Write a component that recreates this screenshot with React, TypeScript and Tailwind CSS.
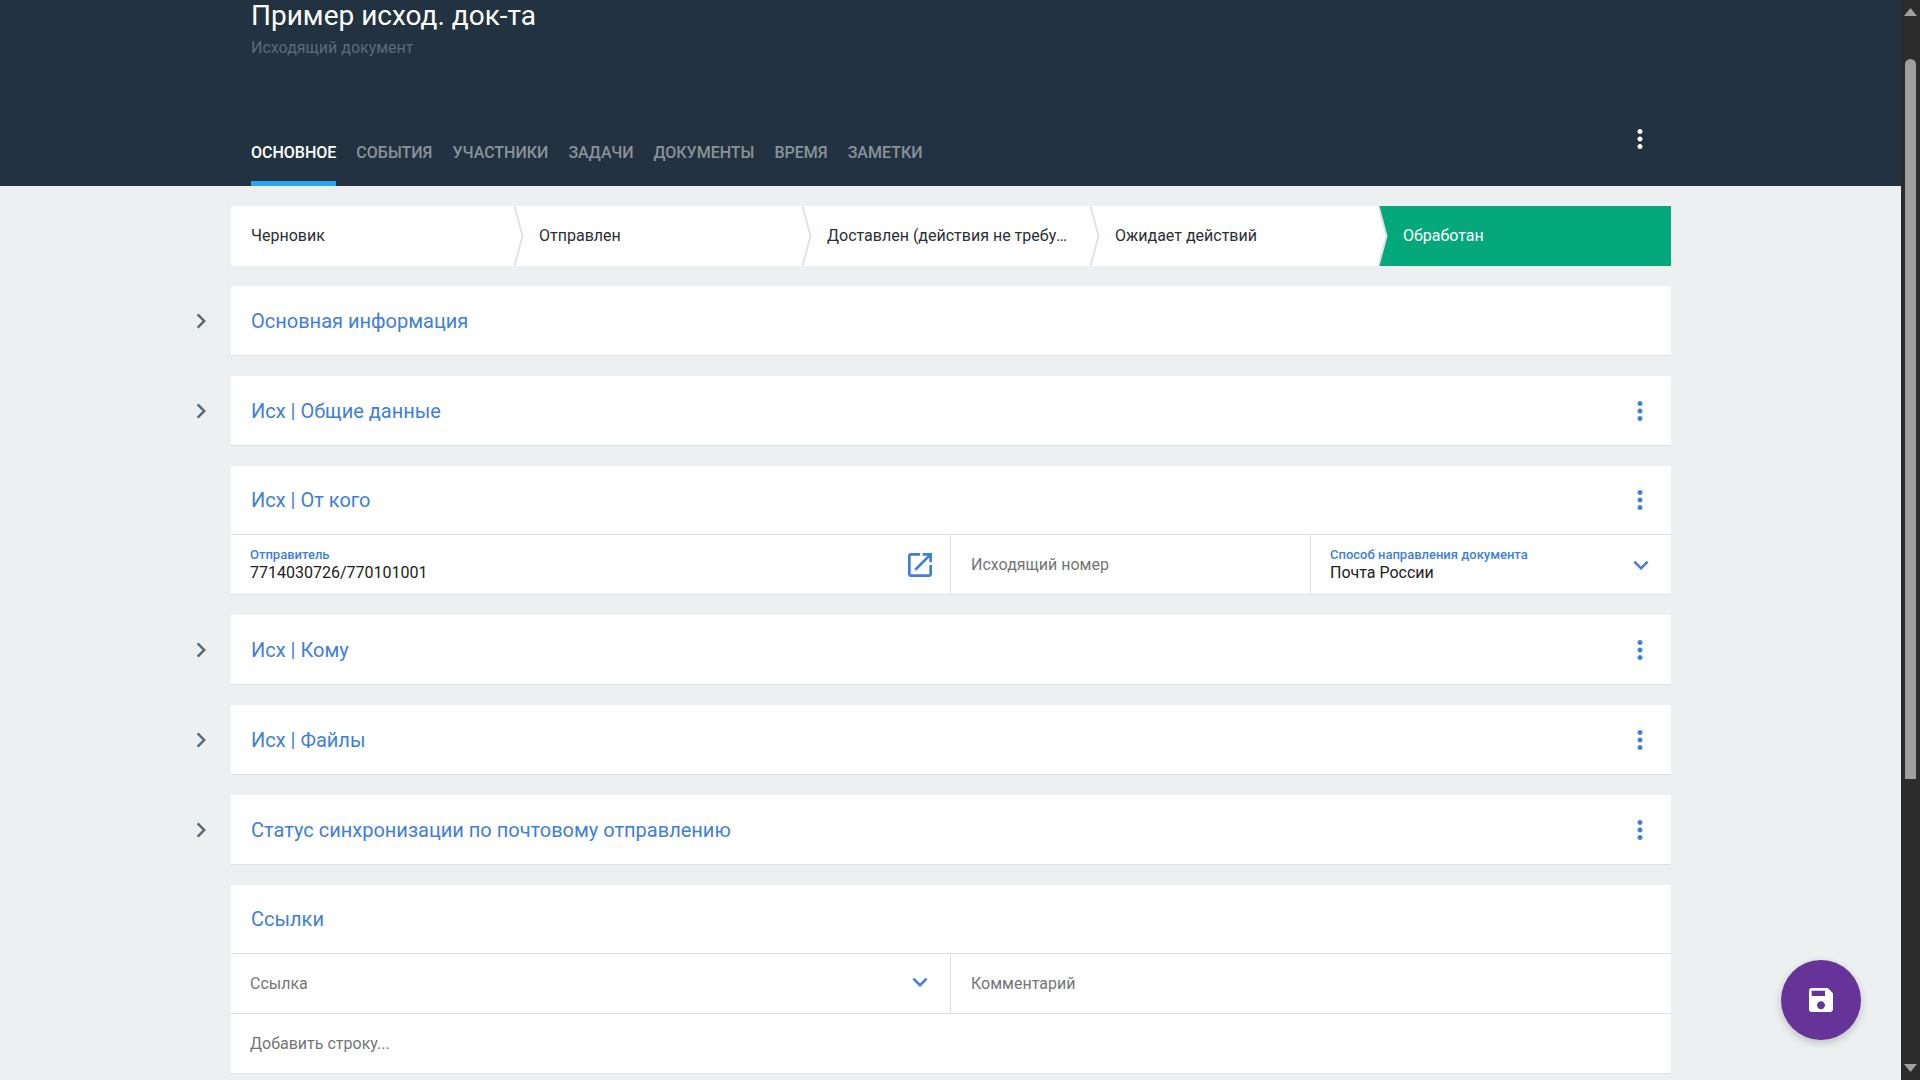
const MoreVert = ({ className }: { className: string }) => (
  <svg viewBox="0 0 24 24" width="30" height="30" fill="currentColor" className={className}>
    <path d="M12 8c1.1 0 2-.9 2-2s-.9-2-2-2-2 .9-2 2 .9 2 2 2zm0 2c-1.1 0-2 .9-2 2s.9 2 2 2 2-.9 2-2-.9-2-2-2zm0 6c-1.1 0-2 .9-2 2s.9 2 2 2 2-.9 2-2-.9-2-2-2z" />
  </svg>
);

const ExpandMore = () => (
  <svg viewBox="0 0 24 24" width="30" height="30" fill="currentColor" className="text-[#3f7fd9]">
    <path d="M16.59 8.59L12 13.17 7.41 8.59 6 10l6 6 6-6z" />
  </svg>
);

const OpenInNew = () => (
  <svg viewBox="0 0 24 24" width="32" height="32" fill="currentColor" className="text-[#3f7fd9]">
    <path d="M19 19H5V5h7V3H5c-1.11 0-2 .9-2 2v14c0 1.1.89 2 2 2h14c1.1 0 2-.9 2-2v-7h-2v7zM14 3v2h3.59l-9.83 9.83 1.41 1.41L19 6.41V10h2V3h-7z" />
  </svg>
);

const SaveIcon = () => (
  <svg viewBox="0 0 24 24" width="32" height="32" fill="currentColor" className="text-white">
    <path d="M17 3H5c-1.11 0-2 .9-2 2v14c0 1.1.89 2 2 2h14c1.1 0 2-.9 2-2V7l-4-4zm-5 16c-1.66 0-3-1.34-3-3s1.34-3 3-3 3 1.34 3 3-1.34 3-3 3zm3-10H5V5h10v4z" />
  </svg>
);

const Card = ({
  title,
  kebab = true,
  open = false,
  children,
}: {
  title: string;
  kebab?: boolean;
  open?: boolean;
  children?: React.ReactNode;
}) => (
  <section className="relative bg-white">
    {!open && (
      <svg
        viewBox="0 0 24 24"
        width="30"
        height="30"
        fill="currentColor"
        className="absolute -left-[45px] top-5 text-[#5d6974]"
      >
        <path d="M10 6L8.59 7.41 13.17 12l-4.58 4.59L10 18l6-6z" />
      </svg>
    )}
    <div
      className={`flex items-center justify-between border-b border-[#dde1e4] pl-5 pr-4 ${
        open ? "h-[69px]" : "h-[70px]"
      }`}
    >
      <h2 className="text-[20px] leading-6 font-normal text-[#3f7fd9]">{title}</h2>
      {kebab && <MoreVert className="text-[#3f7fd9]" />}
    </div>
    {children}
  </section>
);

const Stage = ({ label, first = false, active = false }: { label: string; first?: boolean; active?: boolean }) => (
  <div className="relative flex h-full min-w-0 flex-1 items-center px-5">
    {active && (
      <div className="absolute inset-y-0 -left-[5px] right-0 bg-[#05a87a] [clip-path:polygon(0_0,100%_0,100%_100%,0_100%,9px_50%)]" />
    )}
    {!first && (
      <svg viewBox="0 0 10 60" width="10" height="60" className="absolute -left-[5px] top-0" fill="none">
        <polyline points="0.5,0 8.5,30 0.5,60" stroke="#dde3e6" strokeWidth="2" />
      </svg>
    )}
    <span className={`relative truncate text-[16px] ${active ? "text-white" : "text-[#2b2f33]"}`}>{label}</span>
  </div>
);

export default function App() {
  const tabs = ["Основное", "События", "Участники", "Задачи", "Документы", "Время", "Заметки"];
  return (
    <div className="flex h-screen overflow-hidden bg-[#ecf0f1] font-['Roboto',sans-serif]">
      <div className="min-w-0 flex-1 overflow-hidden">
        <header className="flex h-[186px] flex-col bg-[#233240] pl-[251px]">
          <h1 className="text-[28px] leading-8 font-normal text-white">Пример исход. док-та</h1>
          <p className="mt-[6px] text-[16px] leading-5 text-[#5c6b79]">Исходящий документ</p>
          <div className="mt-auto flex h-[66px] items-stretch justify-between pr-[246px]">
            <nav className="flex gap-5">
              {tabs.map((t, i) => (
                <a
                  key={t}
                  className={`flex items-center border-b-[5px] pt-[5px] text-[16px] font-medium uppercase ${
                    i === 0 ? "border-[#29a9ec] text-white" : "border-transparent text-[#8a929a]"
                  }`}
                >
                  {t}
                </a>
              ))}
            </nav>
            <div className="flex items-start pt-[4px]">
              <MoreVert className="text-white" />
            </div>
          </div>
        </header>

        <main className="ml-[231px] flex w-[1440px] flex-col gap-5 pt-5">
          <div className="flex h-[60px] bg-white">
            <Stage first label="Черновик" />
            <Stage label="Отправлен" />
            <Stage label="Доставлен (действия не требуют ответа)" />
            <Stage label="Ожидает действий" />
            <Stage active label="Обработан" />
          </div>

          <Card title="Основная информация" kebab={false} />
          <Card title="Исх | Общие данные" />
          <Card title="Исх | От кого" open>
            <div className="grid h-[60px] grid-cols-[720px_360px_360px] border-b border-[#dde1e4]">
              <div className="flex items-center justify-between border-r border-[#dde1e4] pr-[14px] pl-[19px]">
                <div>
                  <div className="text-[13px] leading-4 font-medium text-[#3f7fd9]">Отправитель</div>
                  <div className="text-[16px] leading-5 text-[#212121]">7714030726/770101001</div>
                </div>
                <OpenInNew />
              </div>
              <div className="flex items-center border-r border-[#dde1e4] pl-5 text-[16px] text-[#757575]">
                Исходящий номер
              </div>
              <div className="flex items-center justify-between pr-[15px] pl-[19px]">
                <div>
                  <div className="text-[13px] leading-4 font-medium text-[#3f7fd9]">Способ направления документа</div>
                  <div className="text-[16px] leading-5 text-[#212121]">Почта России</div>
                </div>
                <ExpandMore />
              </div>
            </div>
          </Card>
          <Card title="Исх | Кому" />
          <Card title="Исх | Файлы" />
          <Card title="Статус синхронизации по почтовому отправлению" />
          <Card title="Ссылки" kebab={false} open>
            <div className="grid h-[60px] grid-cols-[720px_720px] border-b border-[#dde1e4]">
              <div className="flex items-center justify-between border-r border-[#dde1e4] pr-[15px] pl-[19px] text-[16px] text-[#757575]">
                Ссылка
                <span className="-mt-[4px]">
                  <ExpandMore />
                </span>
              </div>
              <div className="flex items-center pl-5 text-[16px] text-[#757575]">Комментарий</div>
            </div>
            <div className="flex h-[60px] items-center border-b border-[#dde1e4] pl-[19px] text-[16px] text-[#757575]">
              Добавить строку...
            </div>
          </Card>
        </main>
      </div>

      <aside className="relative flex h-screen w-[19px] shrink-0 flex-col items-center bg-[#2c2c2c]">
        <svg viewBox="0 0 13 8" width="13" height="8" className="mt-[8px]" fill="#a0a0a0">
          <polygon points="6.5,0 13,8 0,8" />
        </svg>
        <div className="mt-[43px] h-[720px] w-[11px] rounded-t-[6px] bg-[#9f9f9f]" />
        <svg viewBox="0 0 13 8" width="13" height="8" className="mt-auto mb-[8px]" fill="#a0a0a0">
          <polygon points="0,0 13,0 6.5,8" />
        </svg>
      </aside>

      <button className="absolute top-[960px] left-[1781px] flex h-20 w-20 items-center justify-center rounded-full bg-[#663399] shadow-[0_3px_8px_rgba(0,0,0,0.2)]">
        <SaveIcon />
      </button>
    </div>
  );
}
